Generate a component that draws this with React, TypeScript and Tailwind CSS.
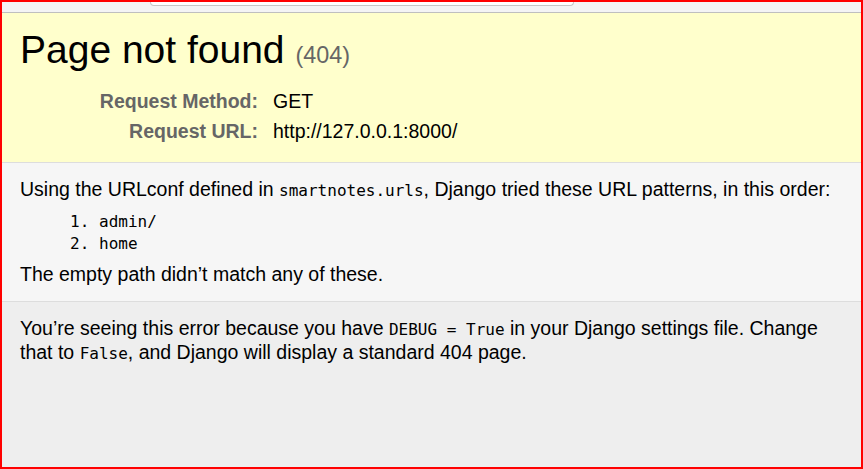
const PATTERNS = ["admin/", "home"];

const sans = "font-['Liberation_Sans',Arial,sans-serif]";
const mono = "font-['DejaVu_Sans_Mono','Liberation_Mono',monospace]";

export default function App() {
  return (
    <div
      className={`flex h-[469px] w-[863px] flex-col overflow-hidden border-2 border-[#ff0000] bg-[#eeeeee] text-black ${sans}`}
    >
      {/* bit of browser chrome peeking in at the top */}
      <div className="flex h-[11px] shrink-0 border-b border-[#bfbfbf] bg-[#f4f4f5]">
        <div className="ml-[148px] h-[4px] w-[424px] rounded-b-[10px] border border-t-0 border-[#c6c6c6] bg-white" />
      </div>

      <div className="shrink-0 border-b border-[#dddddd] bg-[#ffffcc] px-[18px] pt-[14px] pb-[16px]">
        <h1 className="mb-[8px] text-[39px] leading-[45px] font-normal">
          Page not found <span className="text-[23.4px] text-[#666666]">(404)</span>
        </h1>
        <div className="text-[19.5px] leading-[24px]">
          <div className="flex py-[3px]">
            <div className="w-[250px] pr-[12px] text-right font-bold text-[#666666]">Request Method:</div>
            <div className="pl-[3px]">GET</div>
          </div>
          <div className="flex py-[3px]">
            <div className="w-[250px] pr-[12px] text-right font-bold text-[#666666]">Request URL:</div>
            <div className="pl-[3px]">http://127.0.0.1:8000/</div>
          </div>
        </div>
      </div>

      <div className="shrink-0 border-b border-[#dddddd] bg-[#f6f6f6] px-[18px] pt-[15px] pb-[15px] text-[19.5px] leading-[23px]">
        <p>
          Using the URLconf defined in <code className={`${mono} text-[16px]`}>smartnotes.urls</code>, Django tried
          these URL patterns, in this order:
        </p>
        <ol className={`mt-[9px] mb-[8px] ml-[79px] list-decimal ${mono} text-[16px] leading-[22px]`}>
          {PATTERNS.map((p) => (
            <li key={p}>{p}</li>
          ))}
        </ol>
        <p>The empty path didn’t match any of these.</p>
      </div>

      <div className="flex-1 bg-[#eeeeee] px-[18px] pt-[15px] text-[19.5px] leading-[23px]">
        <p>
          You’re seeing this error because you have <code className={`${mono} text-[16px]`}>DEBUG = True</code> in
          your Django settings file. Change that to <code className={`${mono} text-[16px]`}>False</code>, and Django
          will display a standard 404 page.
        </p>
      </div>
    </div>
  );
}
